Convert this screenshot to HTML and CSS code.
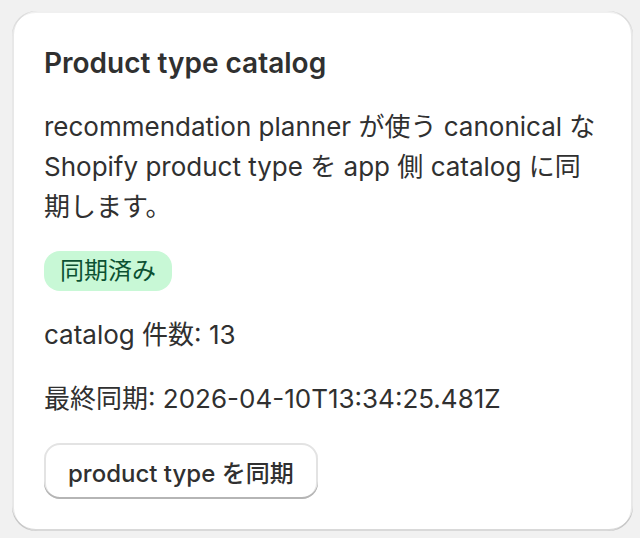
FILE: index.html
```html
<!DOCTYPE html>
<html lang="ja">
<head>
    <meta charset="UTF-8">
    <meta name="viewport" content="width=device-width, initial-scale=1.0">
    <title>Product type catalog</title>
    <link rel="stylesheet" href="styles.css">
</head>
<body>

    <div class="card">
        <h2 class="card-title">Product type catalog</h2>

        <p class="text">recommendation planner が使う canonical な Shopify product type を app 側 catalog に同期します。</p>

        <div>
            <span class="badge badge-success">同期済み</span>
        </div>

        <p class="text">catalog 件数: 13</p>

        <p class="text">最終同期: 2026-04-10T13:34:25.481Z</p>

        <div>
            <button type="button" class="button">product type を同期</button>
        </div>
    </div>

</body>
</html>
```

FILE: styles.css
```css
body {
    margin: 0;
    padding: 11px 7px 8px 12px;
    font-family: Inter, "Noto Sans CJK JP", sans-serif;
    background-color: #f1f1f1;
    color: #303030;
}

.card {
    display: flex;
    flex-direction: column;
    gap: 24px;
    padding: 32px;
    background: white;
    border-radius: 24px;
    box-shadow:
        inset 0 -2px 0 0 rgba(0, 0, 0, 0.15),
        inset 2px 0 0 0 rgba(0, 0, 0, 0.09),
        inset -2px 0 0 0 rgba(0, 0, 0, 0.09),
        inset 0 2px 0 0 rgba(0, 0, 0, 0.06);
}

.card-title {
    margin: 0;
    font-size: 28px;
    line-height: 40px;
    font-weight: 600;
}

.text {
    margin: 0;
    font-size: 26px;
    line-height: 40px;
}

.badge {
    display: inline-flex;
    align-items: center;
    height: 40px;
    padding: 0 16px;
    border-radius: 16px;
    font-size: 24px;
    line-height: 32px;
}

.badge-success {
    background: #c8f8d6;
    color: #0c5132;
}

.button {
    height: 56px;
    padding: 0 24px;
    font-family: inherit;
    font-size: 24px;
    font-weight: 550;
    color: #303030;
    background: white;
    border: none;
    border-radius: 16px;
    cursor: pointer;
    box-shadow:
        inset 0 -2px 0 0 #b5b5b5,
        inset 0 0 0 2px #e3e3e3;
}

.button:hover {
    background: #f7f7f7;
}
```
